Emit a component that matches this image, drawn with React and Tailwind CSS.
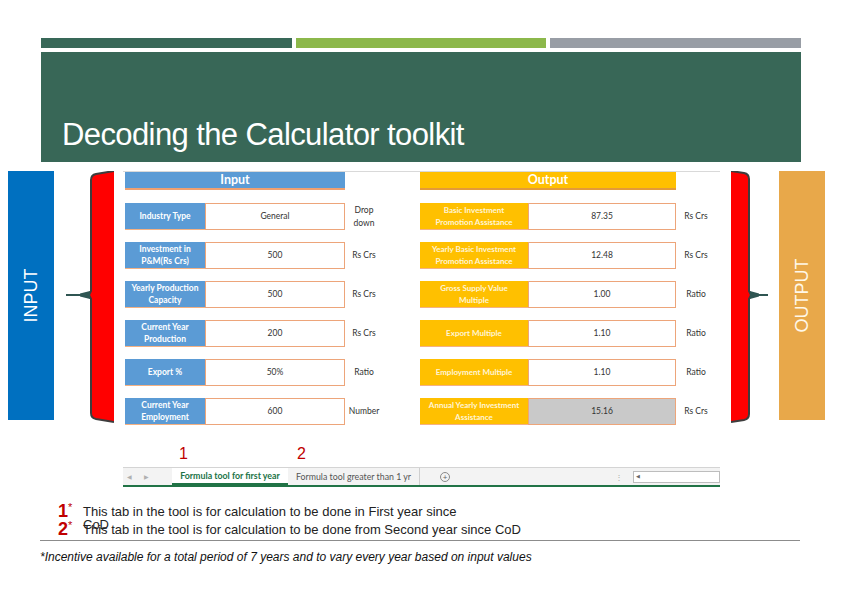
import React from "react";

const INPUTS = [
  ["Industry Type", "General", "Drop\ndown"],
  ["Investment in\nP&M(Rs Crs)", "500", "Rs Crs"],
  ["Yearly Production\nCapacity", "500", "Rs Crs"],
  ["Current Year\nProduction", "200", "Rs Crs"],
  ["Export %", "50%", "Ratio"],
  ["Current Year\nEmployment", "600", "Number"],
];

const OUTPUTS = [
  ["Basic Investment\nPromotion Assistance", "87.35", "Rs Crs"],
  ["Yearly Basic Investment\nPromotion Assistance", "12.48", "Rs Crs"],
  ["Gross Supply Value\nMultiple", "1.00", "Ratio"],
  ["Export Multiple", "1.10", "Ratio"],
  ["Employment  Multiple", "1.10", "Ratio"],
  ["Annual Yearly Investment\nAssistance", "15.16", "Rs Crs"],
];

const XL_FONT = "font-['Lato','Open_Sans',sans-serif]";

function LeftBrace() {
  return (
    <svg width="48" height="252" viewBox="0 0 48 252" className="ml-[12px] shrink-0">
      <path d="M48,0 L30,3 Q25,4 25,9 L25,120 L23,124 L25,128 L25,242 Q25,247 30,248 L48,251 Z" fill="#ff0000" />
      <path d="M48,0 L30,3 Q25,4 25,9 L25,120 L23,124 L25,128 L25,242 Q25,247 30,248 L48,251" fill="none" stroke="#3d3d3d" strokeWidth="2" />
      <line x1="0" y1="124" x2="22" y2="124" stroke="#2f5552" strokeWidth="2" />
      <polygon points="14,122.5 24,120 24,128 14,125.5" fill="#2f5552" />
    </svg>
  );
}

function RightBrace() {
  return (
    <svg width="37" height="252" viewBox="0 0 37 252" className="ml-[11px] shrink-0">
      <path d="M0,0 L13,2 Q18,3 18,8 L18,120 L20,124 L18,128 L18,243 Q18,248 13,249 L0,251 Z" fill="#ff0000" />
      <path d="M0,0 L13,2 Q18,3 18,8 L18,120 L20,124 L18,128 L18,243 Q18,248 13,249 L0,251" fill="none" stroke="#3d3d3d" strokeWidth="2" />
      <line x1="20" y1="124" x2="37" y2="124" stroke="#2f5552" strokeWidth="2" />
      <polygon points="28,122.5 19,120 19,128 28,125.5" fill="#2f5552" />
    </svg>
  );
}

function SheetRow({ input, output, last }) {
  return (
    <div className="flex h-[27px] pl-[2px]">
      <div className="flex w-[80px] items-center justify-center whitespace-pre-line border-b border-[#f4b183] bg-[#5b9bd5] text-center text-[8.5px] font-bold leading-[12px] text-white">
        {input[0]}
      </div>
      <div className="flex w-[140px] items-center justify-center border-[1.5px] border-[#eda57a] bg-white text-[8.5px] text-[#333]">
        {input[1]}
      </div>
      <div className="flex w-[38px] items-center justify-center whitespace-pre-line text-center text-[8.5px] leading-[13px] text-[#333]">
        {input[2]}
      </div>
      <div className="w-[37px]" />
      <div className="flex w-[108px] items-center justify-center whitespace-pre-line border-b border-[#f4b183] bg-[#ffc000] text-center text-[8px] font-bold leading-[12px] text-[#fff5d6]">
        {output[0]}
      </div>
      <div
        className={
          last
            ? "flex w-[148px] items-center justify-center border-[1.5px] border-[#eda57a] bg-[#c9c9c9] text-[8.5px] text-[#333]"
            : "flex w-[148px] items-center justify-center border-[1.5px] border-[#eda57a] bg-white text-[8.5px] text-[#333]"
        }
      >
        {output[1]}
      </div>
      <div className="flex w-[40px] items-center justify-center text-[8.5px] text-[#333]">
        {output[2]}
      </div>
    </div>
  );
}

function Sheet() {
  return (
    <div className={`ml-[9px] flex h-[316px] w-[597px] shrink-0 flex-col border-t border-[#d9d9d9] bg-white ${XL_FONT}`}>
      {/* header */}
      <div className="flex h-[18px] pl-[2px]">
        <div className="flex w-[220px] items-center justify-center border-b-2 border-[#f0a070] bg-[#5b9bd5] text-[12.5px] font-bold text-white">
          Input
        </div>
        <div className="w-[75px]" />
        <div className="flex w-[256px] items-center justify-center border-b-2 border-[#e39a3a] bg-[#ffc000] text-[12.5px] font-bold text-white">
          Output
        </div>
      </div>

      <div className="mt-[13px] flex flex-col gap-[12px]">
        {INPUTS.map((inp, i) => (
          <SheetRow key={i} input={inp} output={OUTPUTS[i]} last={i === 5} />
        ))}
      </div>

      {/* tab numbers */}
      <div className="relative mt-[20px] h-[22px] font-['Liberation_Sans',sans-serif] text-[16px] leading-[18px] text-[#c00000]">
        <span className="absolute left-[56px] top-0">1</span>
        <span className="absolute left-[174px] top-0">2</span>
      </div>

      {/* sheet tabs */}
      <div className="flex h-[20px] items-stretch border-t border-[#d4d4d4] border-b-2 border-b-[#217346] bg-[#f3f3f3] text-[8.8px]">
        <div className="flex w-[49px] items-center gap-[12px] pl-[4px] text-[6px] text-[#b0b0b0]">
          <span>◀</span>
          <span>▶</span>
        </div>
        <div className="flex w-[116px] items-center justify-center border-b-2 border-[#217346] bg-white font-bold text-[#217346]">
          Formula tool for first year
        </div>
        <div className="flex w-[132px] items-center justify-center border-r border-[#cfcfcf] text-[#555]">
          Formula tool greater than 1 yr
        </div>
        <div className="flex w-[50px] items-center justify-center">
          <span className="flex h-[10px] w-[10px] items-center justify-center rounded-full border border-[#8a8a8a] text-[8px] leading-none text-[#666]">
            +
          </span>
        </div>
        <div className="flex w-[163px] items-center justify-end pr-[10px] text-[8px] text-[#aaa]">⋮</div>
        <div className="flex flex-1 items-center">
          <div className="flex h-[12px] w-full items-center border border-[#bdbdbd] bg-white pl-[2px] text-[5px] text-[#666]">
            ◀
          </div>
        </div>
      </div>
    </div>
  );
}

export default function App() {
  return (
    <div className="relative h-[598px] w-[842px] overflow-hidden bg-white pt-[38px] font-['Liberation_Sans',Arial,sans-serif]">
      {/* top stripes */}
      <div className="ml-[41px] flex h-[10px] w-[760px] gap-[4px]">
        <div className="flex-1 bg-[#386858]" />
        <div className="flex-1 bg-[#8cb84b]" />
        <div className="flex-1 bg-[#989da5]" />
      </div>

      {/* banner */}
      <div className="ml-[41px] mt-[4px] flex h-[110px] w-[760px] items-end bg-[#386757] pb-[12px] pl-[21px]">
        <h1 className="text-[31px] leading-[31px] tracking-[-0.6px] text-white">Decoding the Calculator toolkit</h1>
      </div>

      {/* main row */}
      <div className="mt-[9px] flex items-start">
        <div className="ml-[8px] flex h-[249px] w-[46px] shrink-0 items-center justify-center bg-[#0070c0]">
          <span className="-rotate-90 whitespace-nowrap text-[18px] text-white">INPUT</span>
        </div>
        <LeftBrace />
        <Sheet />
        <RightBrace />
        <div className="ml-[11px] flex h-[249px] w-[46px] shrink-0 items-center justify-center bg-[#e8a84a]">
          <span className="-rotate-90 whitespace-nowrap text-[18px] text-[#fff8e8]">OUTPUT</span>
        </div>
      </div>

      {/* footnotes */}
      <div className="mt-[16px] pl-[58px] text-[13px] leading-[13px] text-[#222]">
        <div className="flex items-start">
          <span className="w-[25px] shrink-0 text-[18px] font-bold leading-[16px] text-[#c00000]">
            1<sup className="top-[-6px] text-[11px] font-normal">*</sup>
          </span>
          <span className="mt-[2px] w-[385px]">This tab in the tool is for calculation to be done in First year since CoD</span>
        </div>
        <div className="-mt-[10px] flex items-start">
          <span className="w-[25px] shrink-0 text-[18px] font-bold leading-[16px] text-[#c00000]">
            2<sup className="top-[-6px] text-[11px] font-normal">*</sup>
          </span>
          <span className="mt-[2px]">This tab in the tool is for calculation to be done from Second year since CoD</span>
        </div>
      </div>

      <div className="ml-[40px] mt-[3px] h-px w-[760px] bg-[#8c8c8c]" />

      <p className="ml-[40px] mt-[10px] text-[12px] italic leading-[12px] text-[#111]">
        *Incentive available for a total period of 7 years and to vary every year based on input values
      </p>
    </div>
  );
}
